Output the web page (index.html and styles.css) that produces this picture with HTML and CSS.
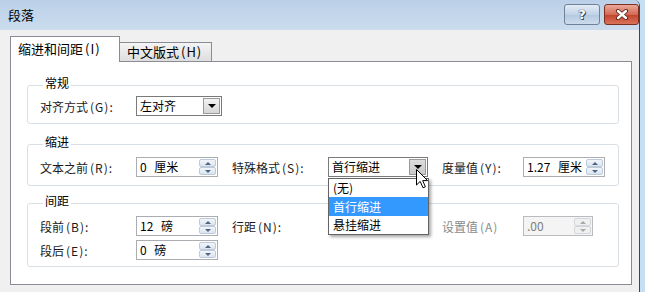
FILE: index.html
```html
<!DOCTYPE html>
<html lang="zh-CN">
<head>
    <meta charset="UTF-8">
    <title>段落</title>
    <link rel="stylesheet" href="styles.css">
</head>
<body>
    <div class="window">
        <div class="titlebar">
            <span class="title">段落</span>
            <div class="caption-btns">
                <button type="button" class="cap-btn help">?</button>
                <button type="button" class="cap-btn close">
                    <svg width="14" height="11" viewBox="0 0 14 11">
                        <path d="M3 2 L11 9 M11 2 L3 9" stroke="#5b2518" stroke-width="4.2" stroke-linecap="round"/>
                        <path d="M3 2 L11 9 M11 2 L3 9" stroke="#fff" stroke-width="2.4" stroke-linecap="round"/>
                    </svg>
                </button>
            </div>
        </div>

        <div class="client">
            <div class="tabs">
                <div class="tab active">缩进和间距<span class="key">(I)</span></div>
                <div class="tab">中文版式<span class="key">(H)</span></div>
            </div>

            <div class="panel">
                <fieldset class="group group-general">
                    <legend>常规</legend>
                    <div class="row">
                        <span class="lbl">对齐方式<span class="key">(G)</span>:</span>
                        <div class="combo combo-align">
                            <span class="combo-text">左对齐</span>
                            <span class="drop-btn"></span>
                        </div>
                    </div>
                </fieldset>

                <fieldset class="group group-indent">
                    <legend>缩进</legend>
                    <div class="row">
                        <span class="lbl">文本之前<span class="key">(R)</span>:</span>
                        <div class="spin">
                            <span class="spin-text">0 厘米</span>
                            <span class="spin-btns"><span class="up"></span><span class="down"></span></span>
                        </div>
                        <span class="lbl lbl-mid">特殊格式<span class="key">(S)</span>:</span>
                        <div class="combo combo-special">
                            <span class="combo-text">首行缩进</span>
                            <span class="drop-btn pressed"></span>
                            <div class="drop-list">
                                <div class="drop-item">(无)</div>
                                <div class="drop-item selected">首行缩进</div>
                                <div class="drop-item">悬挂缩进</div>
                            </div>
                            <svg class="cursor" width="13" height="20" viewBox="0 0 13 20">
                                <path d="M0.5 0.5 L0.5 16 L4.2 12.4 L7 18.8 L9.4 17.8 L6.7 11.6 L11.6 11.6 Z" fill="#fff" stroke="#000" stroke-width="1"/>
                            </svg>
                        </div>
                        <span class="lbl lbl-right">度量值<span class="key">(Y)</span>:</span>
                        <div class="spin">
                            <span class="spin-text">1.27 厘米</span>
                            <span class="spin-btns"><span class="up"></span><span class="down"></span></span>
                        </div>
                    </div>
                </fieldset>

                <fieldset class="group group-spacing">
                    <legend>间距</legend>
                    <div class="row">
                        <span class="lbl">段前<span class="key">(B)</span>:</span>
                        <div class="spin">
                            <span class="spin-text">12 磅</span>
                            <span class="spin-btns"><span class="up"></span><span class="down"></span></span>
                        </div>
                        <span class="lbl lbl-mid">行距<span class="key">(N)</span>:</span>
                        <span class="filler"></span>
                        <span class="lbl lbl-right disabled">设置值<span class="key">(A)</span></span>
                        <div class="spin spin-disabled">
                            <span class="spin-text">.00</span>
                            <span class="spin-btns"><span class="up"></span><span class="down"></span></span>
                        </div>
                    </div>
                    <div class="row">
                        <span class="lbl">段后<span class="key">(E)</span>:</span>
                        <div class="spin">
                            <span class="spin-text">0 磅</span>
                            <span class="spin-btns"><span class="up"></span><span class="down"></span></span>
                        </div>
                    </div>
                </fieldset>
            </div>
        </div>
    </div>
</body>
</html>
```

FILE: styles.css
```css
body {
    margin: 0;
    width: 645px;
    height: 292px;
    overflow: hidden;
    background: linear-gradient(to right, #8fb4d8, #c6dff2);
    font-family: "Noto Sans CJK SC", "Noto Sans", sans-serif;
    font-size: 12px;
    color: #000;
}
.window {
    width: 640px;
    height: 292px;
    box-sizing: border-box;
    border-right: 1px solid #3b4757;
    border-top-right-radius: 6px;
    background-color: #f0f0f0;
    display: flex;
    flex-direction: column;
    overflow: hidden;
}
.titlebar {
    height: 30px;
    flex: none;
    display: flex;
    justify-content: space-between;
    align-items: flex-start;
    padding-left: 8px;
    background: linear-gradient(to bottom, #bbd0e8, #cbdcee);
}
.title {
    font-size: 13px;
    line-height: 30px;
}
.caption-btns {
    display: flex;
    gap: 4px;
    margin-top: 4px;
}
.cap-btn {
    width: 36px;
    height: 21px;
    padding: 0;
    border-radius: 3px;
    display: flex;
    align-items: center;
    justify-content: center;
}
.help {
    border: 1px solid #6f8299;
    background: linear-gradient(to bottom, #e3ecf6, #c2d3e7 50%, #b3c8e0 51%, #cddcec);
    color: #fff;
    font-family: "DejaVu Sans", sans-serif;
    font-weight: bold;
    font-size: 13px;
    text-shadow: 0 0 1px #34455e, 0 0 1px #34455e, 1px 1px 0 #34455e;
}
.close {
    width: 35px;
    border: 1px solid #7d2f20;
    background: linear-gradient(to bottom, #eaa99a, #d46a55 50%, #c3422a 51%, #d8735a);
}
.client {
    flex: 1;
    padding: 6px 7px 0 10px;
}
.tabs {
    display: flex;
    align-items: flex-end;
    height: 26px;
    margin-bottom: -1px;
    position: relative;
    z-index: 1;
}
.tab {
    box-sizing: border-box;
    height: 19px;
    margin-bottom: 1px;
    margin-left: -1px;
    width: 93px;
    padding-left: 7px;
    border: 1px solid #898c95;
    border-bottom: none;
    background: linear-gradient(to bottom, #f4f4f4, #dedede);
    font-size: 13px;
    line-height: 18px;
}
.tab.active {
    width: 110px;
    height: 26px;
    margin: 0;
    padding-left: 7px;
    background: #fff;
    line-height: 24px;
    position: relative;
    z-index: 1;
}
.key {
    margin-left: 2px;
    letter-spacing: 1px;
}
.panel {
    box-sizing: border-box;
    height: 224px;
    background: #fff;
    border: 1px solid #898c95;
    padding: 13px 12px 0 16px;
}
.group {
    margin: 0;
    min-width: 0;
    border: 1px solid #d8e0e6;
    border-radius: 3px;
    padding: 1px 10px 7px 12px;
}
.group legend {
    padding: 0 2px 4px;
    margin-left: 3px;
    line-height: 16px;
    font-size: 12px;
}
.group-indent {
    margin-top: 10px;
    padding-top: 3px;
    padding-bottom: 8px;
}
.group-spacing {
    margin-top: 7px;
    padding-top: 3px;
    padding-bottom: 6px;
}
.row {
    display: flex;
    align-items: center;
    height: 20px;
}
.row + .row {
    margin-top: 4px;
}
.lbl {
    width: 96px;
    flex: none;
    white-space: nowrap;
    color: #1a1a1a;
}
.lbl-mid {
    margin-left: 14px;
}
.lbl-right {
    margin-left: 14px;
    width: 81px;
}
.lbl.disabled {
    color: #8a8a8a;
}
.filler {
    width: 100px;
    flex: none;
}
.spin {
    box-sizing: border-box;
    width: 82px;
    height: 20px;
    flex: none;
    display: flex;
    border: 1px solid #abadb3;
    background: #fff;
}
.spin-text {
    flex: 1;
    min-width: 0;
    padding-left: 3px;
    line-height: 18px;
    overflow: hidden;
    white-space: nowrap;
    word-spacing: 5px;
}
.spin-btns {
    width: 17px;
    flex: none;
    margin: 1px;
    display: flex;
    flex-direction: column;
}
.spin-btns span {
    flex: 1;
    border: 1px solid #bccadb;
    border-radius: 2px;
    background: linear-gradient(to bottom, #f2f6fa, #dae4ef);
    display: flex;
    align-items: center;
    justify-content: center;
}
.spin-btns span::after {
    content: "";
    border-left: 3px solid transparent;
    border-right: 3px solid transparent;
}
.spin-btns .up::after {
    border-bottom: 3px solid #4c6384;
}
.spin-btns .down::after {
    border-top: 3px solid #4c6384;
}
.spin-disabled {
    width: 70px;
    background: #f4f4f4;
    border-color: #b8bcc0;
    color: #7f7f7f;
}
.spin-disabled .spin-btns span {
    border-color: #d3d7db;
    background: #f0f0f0;
}
.spin-disabled .spin-btns .up::after {
    border-bottom-color: #a8a8a8;
}
.spin-disabled .spin-btns .down::after {
    border-top-color: #a8a8a8;
}
.combo {
    box-sizing: border-box;
    height: 20px;
    flex: none;
    display: flex;
    border: 1px solid #7a7a7a;
    background: #fff;
    position: relative;
}
.combo-align {
    width: 86px;
}
.combo-special {
    width: 100px;
}
.combo-text {
    flex: 1;
    padding-left: 3px;
    line-height: 18px;
    white-space: nowrap;
}
.drop-btn {
    width: 15px;
    margin: 1px;
    border: 1px solid #9a9a9a;
    background: linear-gradient(to bottom, #f3f3f3, #d6d6d6);
    display: flex;
    align-items: center;
    justify-content: center;
}
.drop-btn::after {
    content: "";
    border-left: 4px solid transparent;
    border-right: 4px solid transparent;
    border-top: 4px solid #000;
}
.drop-btn.pressed {
    background: linear-gradient(to bottom, #dcdcdc, #c9c9c9);
}
.drop-list {
    position: absolute;
    top: 20px;
    left: -1px;
    width: 101px;
    box-sizing: border-box;
    border: 1px solid #646464;
    background: #fff;
    box-shadow: 2px 2px 3px rgba(0, 0, 0, 0.35);
    z-index: 2;
}
.drop-item {
    height: 18px;
    line-height: 18px;
    padding-left: 4px;
}
.drop-item.selected {
    height: 19px;
    line-height: 19px;
    background: #3399ff;
    color: #fff;
}
.cursor {
    position: absolute;
    left: 87px;
    top: 11px;
    z-index: 3;
}
```
